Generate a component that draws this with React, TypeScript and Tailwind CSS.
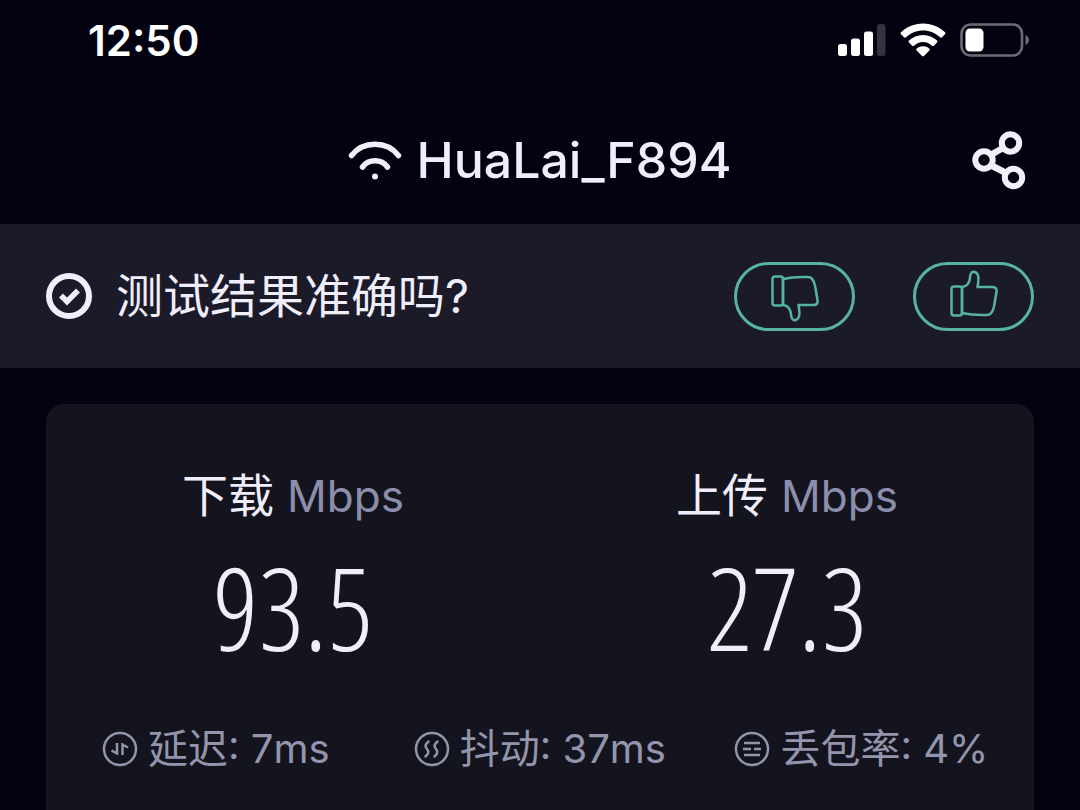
const speeds = [
  { label: "下载", unit: "Mbps", value: "93.5" },
  { label: "上传", unit: "Mbps", value: "27.3" },
]

const metrics = [
  { icon: <LatencyIcon />, label: "延迟", value: "7ms" },
  { icon: <JitterIcon />, label: "抖动", value: "37ms" },
  { icon: <LossIcon />, label: "丢包率", value: "4%" },
]

function SignalIcon() {
  return (
    <svg width="48" height="32" viewBox="0 0 48 32" fill="#fff">
      <rect x="0" y="20" width="9" height="12" rx="2.5" />
      <rect x="13" y="14.500" width="9" height="17.500" rx="2.500" />
      <rect x="26" y="7.500" width="9" height="24.500" rx="2.500" />
      <rect x="39" y="0" width="8.500" height="32" rx="2.500" fill="#34333f" />
    </svg>
  )
}

function StatusWifiIcon() {
  return (
    <svg width="46" height="34" viewBox="0 0 46 34" fill="#fff">
      <path d="M23 0.500C32 0.500 39.800 4 45 9.300c.6.600.6 1.400 0 2l-3 3c-.6.600-1.400.6-2 0C35.500 9.900 29.500 7.400 23 7.400S10.500 9.900 6 14.300c-.6.600-1.400.6-2 0l-3-3c-.6-.6-.6-1.400 0-2C6.200 4 14 .5 23 .5z" />
      <path d="M23 12c5.500 0 10.300 2.200 14 5.600.6.600.6 1.400 0 2l-3.100 3.100c-.6.600-1.300.6-1.900 0-2.400-2.200-5.500-3.700-9-3.700s-6.600 1.500-9 3.700c-.6.600-1.300.6-1.900 0L9 19.600c-.6-.6-.6-1.400 0-2C12.700 14.200 17.500 12 23 12z" />
      <path d="M23 23.300c2.400 0 4.500.8 6.200 2.200.7.600.7 1.400.1 2l-5.300 5.400c-.6.600-1.400.6-2 0l-5.300-5.400c-.6-.6-.6-1.400.1-2 1.700-1.400 3.800-2.200 6.200-2.200z" />
    </svg>
  )
}

function BatteryIcon() {
  return (
    <svg width="70" height="34" viewBox="0 0 70 34" fill="none">
      <rect x="1.500" y="1.500" width="60.500" height="31" rx="9" stroke="#6b6a76" strokeWidth="2.600" />
      <rect x="5.500" y="5.500" width="18" height="23" rx="4.500" fill="#fff" />
      <path d="M65.500 12c2.200.8 3.500 2.700 3.500 5s-1.300 4.200-3.500 5z" fill="#6b6a76" />
    </svg>
  )
}

function WifiIcon() {
  return (
    <svg width="54" height="40" viewBox="0 0 54 40" fill="none" stroke="#f0effa" strokeWidth="5.500" strokeLinecap="round">
      <path d="M3.500 15.500C9 8.500 17.500 4.300 27 4.300S45 8.500 50.500 15.500" />
      <path d="M14.500 27c2.800-3.800 7.300-6.200 12.500-6.200S36.700 23.200 39.500 27" />
      <circle cx="27" cy="36.500" r="3" fill="#f0effa" stroke="none" />
    </svg>
  )
}

function ShareIcon() {
  return (
    <svg width="54" height="60" viewBox="0 0 54 60" fill="none" stroke="#f0effa" strokeWidth="6">
      <path d="M19.500 24.500 31 18M19.500 35.500 34 43" strokeWidth="6.500" />
      <circle cx="12" cy="30" r="8.700" />
      <circle cx="38.500" cy="13" r="8.700" />
      <circle cx="41.500" cy="47.500" r="8.700" />
    </svg>
  )
}

function CheckCircleIcon() {
  return (
    <svg width="46" height="46" viewBox="0 0 46 46" fill="none" stroke="#efeefa">
      <circle cx="23" cy="23" r="20" strokeWidth="6" />
      <path d="M15 22.500l6 6L32 17.500" strokeWidth="5.500" />
    </svg>
  )
}

function ThumbIcon({ down = false }: { down?: boolean }) {
  return (
    <svg
      width="48"
      height="52"
      viewBox="0 0 48 52"
      fill="none"
      stroke="#57b3a4"
      strokeWidth="2.500"
      strokeLinejoin="round"
      className={down ? "-scale-y-100" : ""}
    >
      <rect x="1.500" y="16.500" width="10.500" height="29" rx="2.500" />
      <path d="M12 17c4.500-.5 6.500-3 7.500-6.500.7-2.500.2-4.500 1.500-7 .8-1.600 2.300-2 3.800-1.500 2.700.9 3.700 4 3.600 7 0 2.500-.3 5-.9 8H42.500c3.200 0 4.600 2 4 5L44 36.500c-1 4.500-2.500 8.500-7 8.500-8.500.3-16.500 0-25-2z" />
    </svg>
  )
}

function LatencyIcon() {
  return (
    <svg width="36" height="36" viewBox="0 0 36 36" fill="none" stroke="#9495ac" strokeWidth="2.500">
      <circle cx="18" cy="18" r="16" />
      <path d="M15 12v10.500l-5.500-3M20.500 24V13.500l5.500 3" />
    </svg>
  )
}

function JitterIcon() {
  return (
    <svg width="36" height="36" viewBox="0 0 36 36" fill="none" stroke="#9495ac" strokeWidth="2.500" strokeLinecap="round">
      <circle cx="18" cy="18" r="16" />
      <path d="M14.500 10.500c-4 3.500-3.500 5-1.500 7.500s2 4.500-1.500 7.500M23.500 10.500c-4 3.500-3.500 5-1.500 7.500s2 4.500-1.500 7.500" />
    </svg>
  )
}

function LossIcon() {
  return (
    <svg width="36" height="36" viewBox="0 0 36 36" fill="none" stroke="#9495ac" strokeWidth="2.500">
      <circle cx="18" cy="18" r="16" />
      <path d="M10 12h16M9 18h8M20 18h7M10 24h16" />
    </svg>
  )
}

export default function App() {
  return (
    <div className="flex min-h-screen flex-col bg-[#020210] font-['Inter','Noto_Sans_CJK_SC',sans-serif] text-[#efeefa]">
      <div className="flex h-20 items-center justify-between pr-[50px] pl-[88px]">
        <span className="text-[42px] font-semibold text-white">12:50</span>
        <div className="flex items-center gap-3.5">
          <SignalIcon />
          <StatusWifiIcon />
          <BatteryIcon />
        </div>
      </div>

      <header className="grid h-36 grid-cols-[1fr_auto_1fr] items-center px-[54px] pt-4">
        <h1 className="col-start-2 flex items-center gap-3.5 text-[50px] font-medium">
          <WifiIcon />
          HuaLai_F894
        </h1>
        <button type="button" aria-label="分享" className="justify-self-end">
          <ShareIcon />
        </button>
      </header>

      <section className="flex h-36 items-center justify-between bg-[#1b1a28] px-[46px]">
        <div className="flex items-center gap-6 text-[47px]">
          <CheckCircleIcon />
          <p>测试结果准确吗?</p>
        </div>
        <div className="flex gap-[58px]">
          <button
            type="button"
            aria-label="不准确"
            className="flex h-[69px] w-[121px] items-center justify-center rounded-full border-3 border-[#57b3a4]"
          >
            <ThumbIcon down />
          </button>
          <button
            type="button"
            aria-label="准确"
            className="flex h-[69px] w-[121px] items-center justify-center rounded-full border-3 border-[#57b3a4]"
          >
            <ThumbIcon />
          </button>
        </div>
      </section>

      <main className="mx-[46px] mt-9 flex-1 rounded-t-[18px] bg-[#14141f] pt-14">
        <div className="grid grid-cols-2">
          {speeds.map((speed) => (
            <div key={speed.label} className="flex flex-col items-center">
              <h2 className="text-[46px] leading-[70px]">
                {speed.label} <span className="text-[44px] text-[#8c8eab]">{speed.unit}</span>
              </h2>
              <p className="font-['Open_Sans_Condensed_Light','Roboto_Condensed',sans-serif] text-[114px] leading-[152px] font-light">
                {speed.value}
              </p>
            </div>
          ))}
        </div>
        <ul className="grid grid-cols-[311fr_320fr_263fr] pt-8 pr-9 pl-14 text-[40px] leading-[68px] text-[#9495ac]">
          {metrics.map((metric) => (
            <li key={metric.label} className="flex items-center gap-2.5 whitespace-nowrap">
              {metric.icon}
              {metric.label}: {metric.value}
            </li>
          ))}
        </ul>
      </main>
    </div>
  )
}
